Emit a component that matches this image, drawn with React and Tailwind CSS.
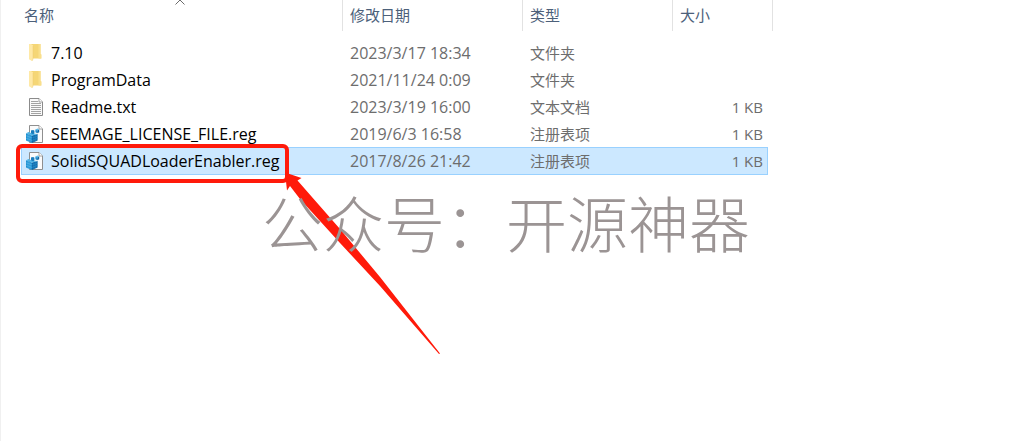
import { clsx } from 'clsx';
import * as React from 'react';

const files = [
    { name: '7.10', modified: '2023/3/17 18:34', type: '文件夹', size: '', icon: 'folder' },
    { name: 'ProgramData', modified: '2021/11/24 0:09', type: '文件夹', size: '', icon: 'folder' },
    { name: 'Readme.txt', modified: '2023/3/19 16:00', type: '文本文档', size: '1 KB', icon: 'text' },
    { name: 'SEEMAGE_LICENSE_FILE.reg', modified: '2019/6/3 16:58', type: '注册表项', size: '1 KB', icon: 'reg' },
    {
        name: 'SolidSQUADLoaderEnabler.reg',
        modified: '2017/8/26 21:42',
        type: '注册表项',
        size: '1 KB',
        icon: 'reg',
        selected: true,
    },
];

const FolderIcon = () => (
    <svg viewBox="0 0 17 18" className="h-[18px] w-[17px] shrink-0" aria-hidden="true">
        <path d="M4 0H14.5V10L15.3 10.5V14.5H4Z" fill="#f5d676" />
        <path d="M12.5 0H14.5V10L15.3 10.5V14.5H12.5Z" fill="#f9df8c" />
        <path d="M3 0H5L7 1.5V15L6 17L3 15.2Z" fill="#ffe9a6" />
        <path d="M7 2V15L6 17" fill="none" stroke="#ecca6c" strokeWidth="0.5" />
    </svg>
);

const TextIcon = () => (
    <svg viewBox="0 0 17 18" className="h-[18px] w-[17px] shrink-0" aria-hidden="true">
        <path d="M3.5 0.5H13L16.5 4V17.5H3.5Z" fill="#fafafa" stroke="#8b8b8b" />
        <path d="M13 0.5V4H16.5" fill="#ffffff" stroke="#8b8b8b" strokeWidth="0.8" />
        <path d="M5 3.5H12M5 5.5H15M5 7.5H15M5 9.5H15M5 11.5H15M5 13.5H15M5 15.5H15" stroke="#a3a3a3" />
    </svg>
);

const RegIcon = () => (
    <svg viewBox="0 0 17 18" className="h-[18px] w-[17px] shrink-0" aria-hidden="true">
        <path d="M3.5 0.5H13L16.5 4V17.5H3.5Z" fill="#fbfbfb" stroke="#8f8f8f" />
        <path d="M13 0.5V4H16.5" fill="#ffffff" stroke="#8f8f8f" strokeWidth="0.8" />
        {/* stacked block */}
        <path d="M0 8.2L6 10.4V18L0 15.6Z" fill="#1e8fd0" />
        <path d="M11.6 9L6 10.4V18L11.6 15.4Z" fill="#0f68a8" />
        <path d="M0 8.2L2.6 7L5 7.9V5.6L7.2 6.4V8.6L11.6 9L6 10.4Z" fill="#4fb4e6" />
        <path d="M5 5.6L7.2 5L8.4 5.8V8.6L7 9.2L5 8.3Z" fill="#1a7dbe" />
        <path d="M0 10.7L6 12.9M0 13.2L6 15.4M2 9V16.3M4 9.7V17.1" stroke="#69c3ee" strokeWidth="0.5" />
        <path d="M11.6 11.2L6 12.9M11.6 13.3L6 15.4M7.9 10V17M9.8 9.5V16.2" stroke="#2d94d0" strokeWidth="0.5" />
        {/* loose cube */}
        <path d="M9.4 4.4L11.6 3.6L13.2 4.6L11.2 5.5Z" fill="#5bbdec" />
        <path d="M9.4 4.4L11.2 5.5V8.2L9.4 7.2Z" fill="#1e8fd0" />
        <path d="M13.2 4.6L11.2 5.5V8.2L13.2 7.3Z" fill="#0f68a8" />
    </svg>
);

const icons = { folder: FolderIcon, text: TextIcon, reg: RegIcon };

const HeaderCell = ({ children, className, ...props }) => (
    <th className={clsx('h-[31px] border-r border-[#e2e2e2] p-0 text-left align-top font-normal', className)} {...props}>
        <button type="button" className="block h-[30px] w-full text-left text-[#4c607a]">
            {children}
        </button>
    </th>
);

const FileRow = ({ file }) => {
    const Icon = icons[file.icon];
    const cell = clsx(
        'border-y p-0',
        file.selected ? 'h-7 border-[#99d1ff] bg-[#cce8ff]' : 'h-[27px] border-transparent'
    );

    return (
        <tr aria-selected={Boolean(file.selected)}>
            <td className={clsx(cell, 'border-l pl-1')}>
                <div className="flex items-center gap-2 text-base leading-5 text-black">
                    <Icon />
                    <span>{file.name}</span>
                </div>
            </td>
            <td className={clsx(cell, 'pl-[7px] text-base leading-5')}>{file.modified}</td>
            <td className={clsx(cell, 'pl-[7px]')}>{file.type}</td>
            <td className={clsx(cell, 'border-r pr-1 text-right')}>{file.size}</td>
            <td className="p-0" />
        </tr>
    );
};

const FileTable = () => (
    <table className="w-[752px] table-fixed border-separate border-spacing-0 text-[15px] leading-5 whitespace-nowrap text-[#6d6d6d]">
        <colgroup>
            <col className="w-[322px]" />
            <col className="w-[180px]" />
            <col className="w-[150px]" />
            <col />
            <col className="w-[5px]" />
        </colgroup>
        <thead>
            <tr>
                <HeaderCell className="relative pl-[3px]" aria-sort="ascending">
                    名称
                    <svg viewBox="0 0 10 5" className="absolute top-0 left-[154px] h-[5px] w-2.5" aria-hidden="true">
                        <path d="M0.5 4.5L5 0L9.5 4.5" fill="none" stroke="#6b6b6b" />
                    </svg>
                </HeaderCell>
                <HeaderCell className="pl-[7px]">修改日期</HeaderCell>
                <HeaderCell className="pl-[7px]">类型</HeaderCell>
                <HeaderCell className="pl-[7px]" colSpan={2}>
                    大小
                </HeaderCell>
            </tr>
        </thead>
        <tbody>
            <tr aria-hidden="true">
                <td className="h-2 p-0" colSpan={5} />
            </tr>
            {files.map((file) => (
                <FileRow key={file.name} file={file} />
            ))}
        </tbody>
    </table>
);

// Red frame, arrow and watermark drawn over the list
const Annotations = () => (
    <div className="pointer-events-none absolute inset-0">
        <div className="absolute top-[144px] left-[15px] h-[39px] w-[273px] rounded-md border-4 border-[#ff1a0a]" />
        <svg viewBox="0 0 160 184" className="absolute top-[172px] left-[283px] h-[184px] w-40" aria-hidden="true">
            <path d="M1 0.5L17.5 6L13.5 8.5L56 57L96 105L156 181.5L155 182L96 114L56 71L16 27L6 14L3 18.5Z" fill="#ff1a0a" />
        </svg>
        <p className="absolute top-[180px] left-[261px] text-[61px] leading-[90px] font-light whitespace-nowrap text-[#9b9494]">
            公众号：开源神器
        </p>
    </div>
);

export default function App() {
    return (
        <main className="relative min-h-screen overflow-hidden border-l border-[#f0f0f0] bg-white pl-5 font-['Open_Sans','Noto_Sans_CJK_SC',sans-serif]">
            <FileTable />
            <Annotations />
        </main>
    );
}
